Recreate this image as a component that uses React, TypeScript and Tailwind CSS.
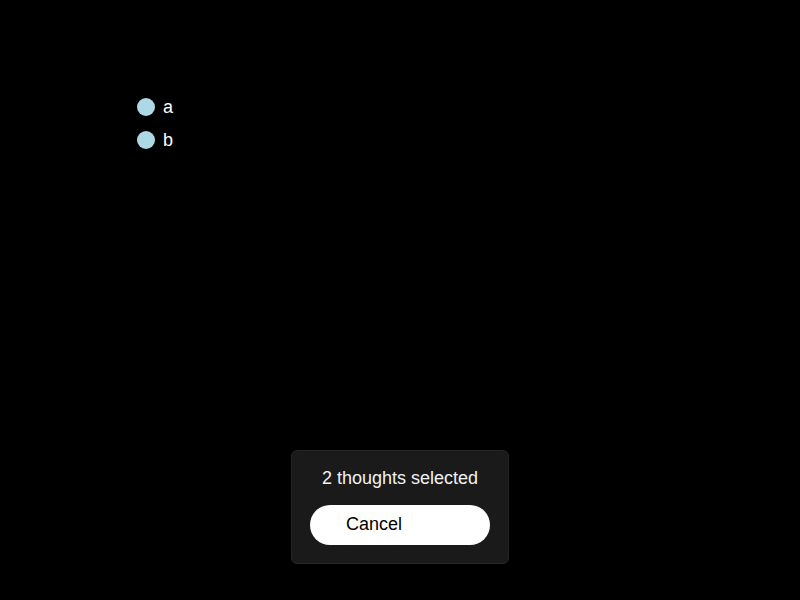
export default function App() {
  const thoughts = ["a", "b"];

  return (
    <div className="flex h-[600px] w-[800px] flex-col bg-black font-['Liberation_Sans',Arial,sans-serif] text-white">
      <ul className="ml-[137px] mt-[90px] flex flex-col">
        {thoughts.map((t) => (
          <li key={t} className="flex h-[33px] items-center gap-[8px] text-[18px]">
            <span className="h-[18px] w-[18px] rounded-full bg-[#add8e6]" />
            <span className="leading-[20px]">{t}</span>
          </li>
        ))}
      </ul>

      <div className="mt-auto mb-[36px] flex justify-center">
        <div className="flex w-[218px] flex-col items-center rounded-[6px] border border-[#262626] bg-[#1a1a1a] px-[18px] pt-[17px] pb-[18px]">
          <p className="text-[18px] leading-[20px] text-[#f2f2f2]">2 thoughts selected</p>
          <button
            type="button"
            className="mt-[17px] h-[40px] w-[180px] rounded-full bg-white pb-[1px] pl-[36px] text-left text-[18px] text-black"
          >
            Cancel
          </button>
        </div>
      </div>
    </div>
  );
}
